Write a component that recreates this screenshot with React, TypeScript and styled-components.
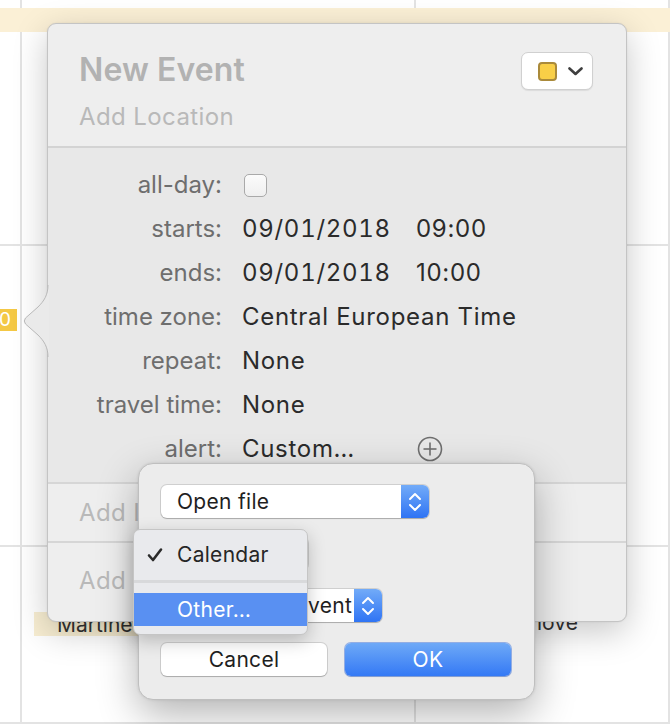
import styled, { createGlobalStyle } from 'styled-components';

const font = `'Inter', 'Noto Sans', 'DejaVu Sans', sans-serif`;

const GlobalStyle = createGlobalStyle`
	html, body {
		margin: 0;
		padding: 0;
		background: #ffffff;
	}
	body {
		font-family: ${font};
		-webkit-font-smoothing: antialiased;
	}
`;

const Page = styled.div`
	position: relative;
	width: 670px;
	height: 724px;
	overflow: hidden;
	background: #ffffff;
`;

// calendar behind the popover
const CalendarGrid = styled.div`
	display: grid;
	grid-template-columns: 22px 394px 1fr;
	grid-template-rows: 246px 301px 1fr;
	height: 100%;
`;

const GridCell = styled.div`
	border-right: 2px solid #e3e3e3;
	border-bottom: 2px solid #e3e3e3;
`;

const AllDayBand = styled.div`
	position: absolute;
	top: 8px;
	left: 0;
	right: 0;
	height: 24px;
	background: #fbf0d6;
`;

const EventChip = styled.div<{ $strong?: boolean }>`
	position: absolute;
	height: 22px;
	line-height: 22px;
	font-size: 19px;
	white-space: nowrap;
	box-sizing: border-box;
	background: ${p => (p.$strong ? '#f4c845' : '#f8eed2')};
	color: ${p => (p.$strong ? '#ffffff' : '#333333')};
`;

const CellText = styled.span`
	position: absolute;
	font-size: 21px;
	color: #333333;
	white-space: nowrap;
`;

// event popover
const Popover = styled.div`
	position: absolute;
	left: 47px;
	top: 23px;
	width: 580px;
	height: 599px;
	box-sizing: border-box;
	border: 1px solid #c4c4c4;
	border-radius: 9px;
	background: #eeeeee;
	box-shadow: 0 10px 34px rgba(0, 0, 0, 0.22), 0 0 2px rgba(0, 0, 0, 0.08);
	display: flex;
	flex-direction: column;
`;

const ArrowSvg = styled.svg`
	position: absolute;
	left: -25px;
	top: 261px;
`;

const Header = styled.div`
	height: 124px;
	box-sizing: border-box;
	padding: 28px 33px 0 31px;
	border-bottom: 2px solid #d3d3d3;
	border-radius: 8px 8px 0 0;
	display: flex;
	justify-content: space-between;
	align-items: flex-start;
`;

const TitleBlock = styled.div`
	display: flex;
	flex-direction: column;
	gap: 16px;
`;

const Title = styled.div`
	font-size: 32px;
	line-height: 36px;
	font-weight: 600;
	color: #b2b2b2;
	letter-spacing: 0.1px;
`;

const Location = styled.div`
	font-size: 24px;
	line-height: 26px;
	color: #b9b9b9;
	letter-spacing: 0.4px;
`;

const ColorButton = styled.div`
	width: 72px;
	height: 38px;
	box-sizing: border-box;
	border: 1px solid #d0d0d0;
	border-radius: 7px;
	background: #ffffff;
	box-shadow: 0 1px 1px rgba(0, 0, 0, 0.08);
	display: flex;
	align-items: center;
	gap: 11px;
	padding-left: 16px;
`;

const Swatch = styled.div`
	width: 19px;
	height: 19px;
	box-sizing: border-box;
	border: 2px solid #aa8a3a;
	border-radius: 4px;
	background: #f9cf47;
`;

const Details = styled.div`
	background: #e8e8e8;
	padding: 15px 0 11px;
	border-bottom: 2px solid #d6d6d6;
`;

const Row = styled.div`
	display: grid;
	grid-template-columns: 174px 1fr;
	column-gap: 20px;
	align-items: center;
	height: 44px;
	font-size: 24px;
	line-height: 44px;
`;

const Label = styled.div`
	text-align: right;
	color: #6e6e6e;
	white-space: nowrap;
`;

const Value = styled.div`
	display: flex;
	align-items: center;
	color: #2b2b2b;
	white-space: nowrap;
	letter-spacing: 0.7px;
`;

const DateText = styled.span`
	width: 174px;
	flex: none;
	font-variant-numeric: tabular-nums;
`;

const Checkbox = styled.div`
	width: 23px;
	height: 23px;
	margin-left: 2px;
	box-sizing: border-box;
	border: 1px solid #a9a9a9;
	border-radius: 5px;
	background: linear-gradient(#fbfbfb, #efefef);
`;

const FooterRow = styled.div<{ $height: number; $last?: boolean }>`
	height: ${p => p.$height}px;
	box-sizing: border-box;
	padding-left: 31px;
	display: flex;
	align-items: center;
	font-size: 24px;
	letter-spacing: 0.4px;
	color: #b9b9b9;
	white-space: nowrap;
	overflow: hidden;
	border-bottom: ${p => (p.$last ? 'none' : '2px solid #d6d6d6')};
`;

// custom alert sheet
const Sheet = styled.div`
	position: absolute;
	left: 138px;
	top: 463px;
	width: 397px;
	height: 237px;
	box-sizing: border-box;
	border: 1px solid #bfbfbf;
	border-radius: 15px;
	background: #ececec;
	box-shadow: 0 14px 40px rgba(0, 0, 0, 0.3), 0 0 3px rgba(0, 0, 0, 0.1);
	padding: 21px 0 0 22px;
	display: flex;
	flex-direction: column;
	gap: 19px;
`;

const PopupButton = styled.div<{ $width: number; $open?: boolean }>`
	position: relative;
	z-index: ${p => (p.$open ? 2 : 1)};
	width: ${p => p.$width}px;
	height: 33px;
	box-sizing: border-box;
	border-radius: 6px;
	background: #ffffff;
	box-shadow: 0 0 0 1px rgba(0, 0, 0, 0.12), 0 1px 1px rgba(0, 0, 0, 0.18);
	display: flex;
	align-items: center;
	justify-content: space-between;
	font-size: 21px;
	color: #1f1f1f;
	letter-spacing: 0.3px;
`;

const PopupText = styled.span<{ $indent?: number }>`
	padding-left: ${p => p.$indent ?? 16}px;
	white-space: nowrap;
	overflow: hidden;
`;

const Stepper = styled.div`
	width: 28px;
	height: 33px;
	flex: none;
	border-radius: 0 6px 6px 0;
	background: linear-gradient(#72abf8, #2f74f4);
	display: flex;
	align-items: center;
	justify-content: center;
`;

const ButtonRow = styled.div`
	display: flex;
	gap: 18px;
	margin-top: 2px;
`;

const PushButton = styled.div<{ $primary?: boolean }>`
	width: 166px;
	height: 33px;
	box-sizing: border-box;
	border-radius: 6px;
	display: flex;
	align-items: center;
	justify-content: center;
	font-size: 21px;
	letter-spacing: 0.3px;
	color: ${p => (p.$primary ? '#ffffff' : '#1f1f1f')};
	background: ${p => (p.$primary ? 'linear-gradient(#6ea9f7, #3479f5)' : '#ffffff')};
	box-shadow: ${p =>
		p.$primary
			? '0 0 0 1px rgba(40, 100, 220, 0.45), 0 1px 1px rgba(0, 0, 0, 0.15)'
			: '0 0 0 1px rgba(0, 0, 0, 0.12), 0 1px 1px rgba(0, 0, 0, 0.18)'};
`;

const Menu = styled.div`
	position: absolute;
	left: -28px;
	top: -8px;
	width: 175px;
	box-sizing: border-box;
	padding: 8px 0;
	border: 1px solid #c5c5c5;
	border-radius: 7px;
	background: #e9eaed;
	box-shadow: 0 6px 18px rgba(0, 0, 0, 0.22);
`;

const MenuItem = styled.div<{ $highlighted?: boolean }>`
	height: 33px;
	display: flex;
	align-items: center;
	font-size: 21px;
	letter-spacing: 0.3px;
	color: ${p => (p.$highlighted ? '#ffffff' : '#262626')};
	background: ${p => (p.$highlighted ? '#5990f2' : 'transparent')};
`;

const CheckSlot = styled.span`
	width: 43px;
	padding-left: 13px;
	box-sizing: border-box;
	display: flex;
	align-items: center;
`;

const MenuSeparator = styled.div`
	height: 3px;
	margin: 9px 0 10px;
	background: #d8d9db;
`;

const Chevron = () => (
	<svg width="15" height="9" viewBox="0 0 15 9">
		<polyline points="1.5,1.5 7.5,7 13.5,1.5" fill="none" stroke="#3f3f3f" strokeWidth="2.6" strokeLinecap="round" strokeLinejoin="round" />
	</svg>
);

const StepperArrows = () => (
	<svg width="14" height="22" viewBox="0 0 14 22">
		<polyline points="2,8 7,3 12,8" fill="none" stroke="#ffffff" strokeWidth="2" strokeLinecap="round" strokeLinejoin="round" />
		<polyline points="2,14 7,19 12,14" fill="none" stroke="#ffffff" strokeWidth="2" strokeLinecap="round" strokeLinejoin="round" />
	</svg>
);

const PlusCircle = () => (
	<svg width="26" height="26" viewBox="0 0 26 26" style={{ marginLeft: 1 }}>
		<circle cx="13" cy="13" r="11.5" fill="none" stroke="#6f6f6f" strokeWidth="1.6" />
		<line x1="13" y1="6.5" x2="13" y2="19.5" stroke="#6f6f6f" strokeWidth="1.6" />
		<line x1="6.5" y1="13" x2="19.5" y2="13" stroke="#6f6f6f" strokeWidth="1.6" />
	</svg>
);

const CheckMark = () => (
	<svg width="16" height="16" viewBox="0 0 16 16">
		<polyline points="2,8.5 6,13 14,2.5" fill="none" stroke="#2b2b2b" strokeWidth="2.6" strokeLinecap="round" strokeLinejoin="round" />
	</svg>
);

const PopoverArrow = () => (
	<ArrowSvg width="26" height="72" viewBox="0 0 26 72">
		<path d="M26,0 L25,0 C25,10 21,16 15,22 L2.5,33 Q0,36 2.5,39 L15,50 C21,56 25,62 25,72 L26,72 Z" fill="#eaeaea" />
		<path d="M25,0 C25,10 21,16 15,22 L2.5,33 Q0,36 2.5,39 L15,50 C21,56 25,62 25,72" fill="none" stroke="#b9b9b9" strokeWidth="1" />
	</ArrowSvg>
);

const rows: { label: string; value: string; time?: string }[] = [
	{ label: 'starts:', value: '09/01/2018', time: '09:00' },
	{ label: 'ends:', value: '09/01/2018', time: '10:00' },
	{ label: 'time zone:', value: 'Central European Time' },
	{ label: 'repeat:', value: 'None' },
	{ label: 'travel time:', value: 'None' },
];

export default function App() {
	return (
		<Page>
			<GlobalStyle />
			<CalendarGrid>
				{Array.from({ length: 9 }).map((_, i) => (
					<GridCell key={i} />
				))}
			</CalendarGrid>
			<AllDayBand />
			<EventChip $strong style={{ left: -60, top: 309, width: 77, textAlign: 'right', paddingRight: 6 }}>
				09:00
			</EventChip>
			<EventChip style={{ left: 34, top: 612, width: 381, height: 24, lineHeight: '26px', paddingLeft: 23, fontSize: 21 }}>
				Martine
			</EventChip>
			<CellText style={{ left: 537, top: 610 }}>love</CellText>

			<Popover>
				<PopoverArrow />
				<Header>
					<TitleBlock>
						<Title>New Event</Title>
						<Location>Add Location</Location>
					</TitleBlock>
					<ColorButton>
						<Swatch />
						<Chevron />
					</ColorButton>
				</Header>
				<Details>
					<Row>
						<Label>all-day:</Label>
						<Value>
							<Checkbox />
						</Value>
					</Row>
					{rows.map(r => (
						<Row key={r.label}>
							<Label>{r.label}</Label>
							<Value>
								{r.time ? <DateText>{r.value}</DateText> : r.value}
								{r.time}
							</Value>
						</Row>
					))}
					<Row>
						<Label>alert:</Label>
						<Value>
							<DateText>Custom…</DateText>
							<PlusCircle />
						</Value>
					</Row>
				</Details>
				<FooterRow $height={59}>Add Invitees</FooterRow>
				<FooterRow $height={74} $last>
					Add Notes, URL, or Attachments
				</FooterRow>
			</Popover>

			<Sheet>
				<PopupButton $width={268}>
					<PopupText>Open file</PopupText>
					<Stepper>
						<StepperArrows />
					</Stepper>
				</PopupButton>
				<PopupButton $width={147} $open>
					<PopupText>Calendar</PopupText>
					<Stepper>
						<StepperArrows />
					</Stepper>
					<Menu>
						<MenuItem>
							<CheckSlot>
								<CheckMark />
							</CheckSlot>
							Calendar
						</MenuItem>
						<MenuSeparator />
						<MenuItem $highlighted>
							<CheckSlot />
							Other…
						</MenuItem>
					</Menu>
				</PopupButton>
				<PopupButton $width={221}>
					<PopupText $indent={30}>At time of event</PopupText>
					<Stepper>
						<StepperArrows />
					</Stepper>
				</PopupButton>
				<ButtonRow>
					<PushButton>Cancel</PushButton>
					<PushButton $primary>OK</PushButton>
				</ButtonRow>
			</Sheet>
		</Page>
	);
}
